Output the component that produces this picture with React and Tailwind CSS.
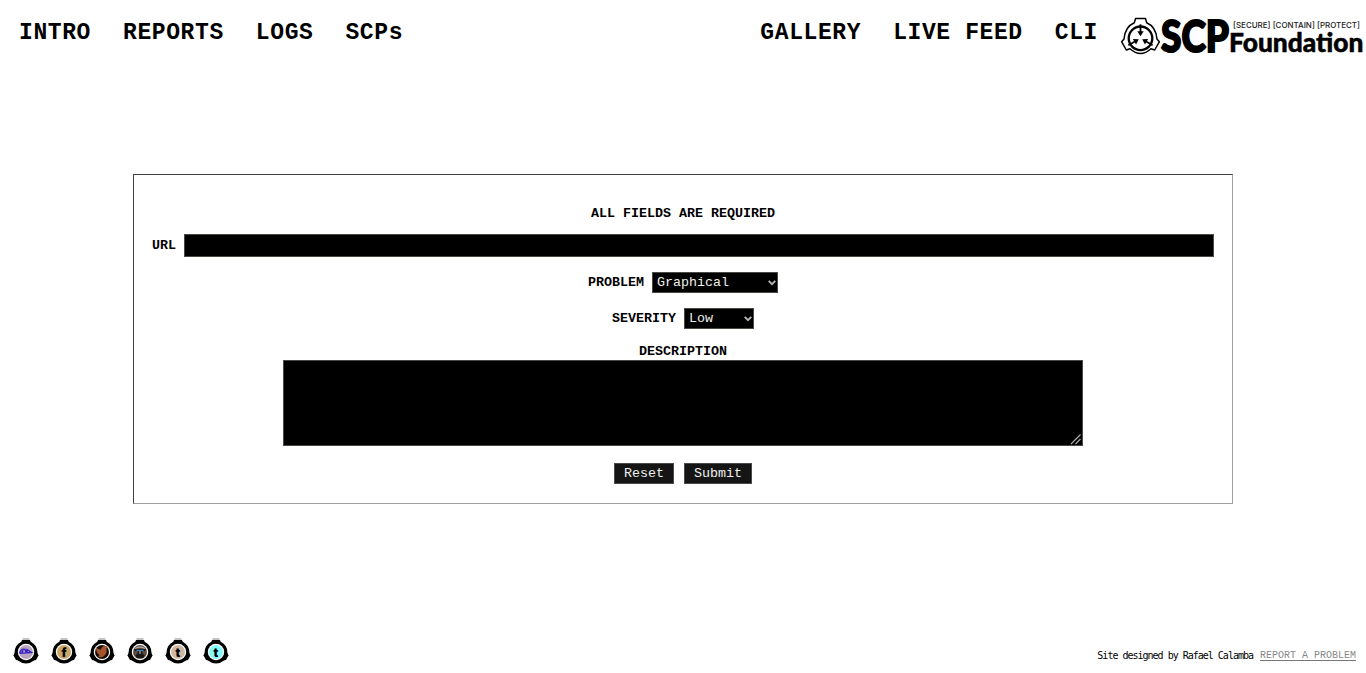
import React from "react";

const navLink = "px-4 text-[23px] leading-[27px] tracking-[0.6px] font-bold whitespace-nowrap";
const control = "border border-[#4a4a45] bg-black text-[#f0f0e8]";

function Logo() {
  return (
    <svg width="246" height="44" viewBox="1120 14 246 44" className="shrink-0 overflow-visible" role="img" aria-label="SCP Foundation">
      <g fill="none" stroke="#000" transform="translate(0 0.8)">
        <path strokeWidth="1.5" strokeLinejoin="round" d="M1135.500 17.800h10l1.200 4.200q9.300 4 10.300 16.300l2.300 2.700-4.600 8.200-3.700-1.200q-10.500 9.500-21 0l-3.700 1.200-4.600-8.200 2.300-2.700q1-12.300 10.300-16.300z" />
        <circle cx="1140.500" cy="37.500" r="11.800" strokeWidth="2.300" />
        {[0, 120, 240].map((angle) => (
          <g key={angle} transform={`rotate(${angle} 1140.5 37.5)`}>
            <path d="M1140.500 23.500v9" strokeWidth="1.800" />
            <path d="M1137.300 30.500h6.400l-3.200 5z" fill="#000" stroke="none" />
          </g>
        ))}
      </g>
      <g fill="#000" stroke="#000" fontFamily="Lato, sans-serif" fontWeight="900">
        <text x="1161" y="52" fontSize="44" strokeWidth="2" textLength="68" lengthAdjust="spacingAndGlyphs">SCP</text>
        <text x="1229" y="52" fontSize="26" strokeWidth="0.500" textLength="134.500" lengthAdjust="spacingAndGlyphs">Foundation</text>
      </g>
      <text x="1233" y="28" fill="#222" fontFamily="Inter, sans-serif" fontSize="8" fontWeight="500" textLength="127" lengthAdjust="spacingAndGlyphs">[SECURE] [CONTAIN] [PROTECT]</text>
    </svg>
  );
}

function Badge({ fill, label, children }) {
  return (
    <svg width="28" height="30" viewBox="0 0 28 30" role="img" aria-label={label}>
      <path d="M10.500 1h7v3h-7z" fill="#c4c4c4" />
      <path d="M1 18.500h26" stroke="#bbb" strokeWidth="0.800" />
      <path d="M10 3h8l.7 1.800q6.800 3.200 6.800 11.200l1 2.500-2.500 4.500-1.500.3q-8.500 6.500-17 0L4 23l-2.500-4.500 1-2.500q0-8 6.800-11.200z" fill="#000" />
      <circle cx="14" cy="15" r="8.200" fill="#fff" />
      <circle cx="14" cy="15" r="7" fill={fill} />
      {children}
    </svg>
  );
}

function Letter({ children }) {
  return <text x="14" y="19.5" textAnchor="middle" fontFamily="Inter, sans-serif" fontWeight="900" fontSize="12">{children}</text>;
}

function Chevron() {
  return (
    <svg width="8" height="6" viewBox="0 0 8 6" className="shrink-0">
      <path d="M.7.8L4 4.200 7.300.8" fill="none" stroke="#b5b5b5" strokeWidth="1.900" />
    </svg>
  );
}

function Picker({ label, value, width }) {
  return (
    <div className="flex h-[21px] items-center justify-center gap-2">
      <span className="font-bold">{label}</span>
      <button type="button" className={`${control} ${width} flex h-[21px] items-center justify-between pr-px pl-1`}>
        <span>{value}</span>
        <Chevron />
      </button>
    </div>
  );
}

export default function App() {
  return (
    <div className="flex h-[673px] flex-col overflow-hidden bg-white font-['Liberation_Mono','Courier_New',monospace] text-black">
      <header className="flex h-[174px] items-start justify-between pt-3.5 pl-[3px]">
        <nav className="flex pt-[6px]">
          <a className={navLink}>INTRO</a>
          <a className={navLink}>REPORTS</a>
          <a className={navLink}>LOGS</a>
          <a className={navLink}>SCPs</a>
        </nav>
        <div className="flex">
          <nav className="flex pt-[6px] pr-[6px]">
            <a className={navLink}>GALLERY</a>
            <a className={navLink}>LIVE FEED</a>
            <a className={navLink}>CLI</a>
          </nav>
          <Logo />
        </div>
      </header>

      <form className="mx-auto flex h-[330px] w-[1100px] shrink-0 flex-col border border-t-[#404040] border-r-[#a0a0a0] border-b-[#a0a0a0] border-l-[#404040] px-[18px] pt-[31px] text-[13.333px] leading-[15px]">
        <p className="text-center font-bold">ALL FIELDS ARE REQUIRED</p>
        <label className="mt-[13px] flex items-center gap-2 font-bold">
          URL
          <input className={`${control} h-[23px] min-w-0 flex-1`} />
        </label>
        <div className="mt-[15px] flex flex-col gap-[15px]">
          <Picker label="PROBLEM" value="Graphical" width="w-[126px]" />
          <Picker label="SEVERITY" value="Low" width="w-[70px]" />
        </div>
        <label className="mt-[15px] flex flex-col items-center gap-px font-bold">
          DESCRIPTION
          <span className={`${control} flex h-[86px] w-[800px] items-end justify-end`}>
            <svg width="12" height="12" viewBox="0 0 12 12">
              <path d="M1 11L10.500 1.500M5.500 11L10.500 6" stroke="#aaa" strokeWidth="1.200" />
            </svg>
          </span>
        </label>
        <div className="mt-[17px] flex justify-center gap-2.5">
          <button type="button" className="h-[21px] w-[60px] border border-[#4a4a4a] bg-[#151515] text-[#f0f0f0]">Reset</button>
          <button type="button" className="h-[21px] w-[68px] border border-[#4a4a4a] bg-[#151515] text-[#f0f0f0]">Submit</button>
        </div>
      </form>

      <footer className="mt-auto flex h-[36px] items-start justify-between pr-[10px] pl-3">
        <div className="flex gap-2.5">
          <Badge fill="#b7a5bd" label="DeviantArt">
            <path d="M7.500 16q2-5 5.500-3.500l1 2.500 1-2.500 4.500 3-12 .8m3.500-3l-1 3m5-3v3" fill="none" stroke="#3920c8" strokeWidth="1.400" />
          </Badge>
          <Badge fill="#c9a668" label="Facebook"><Letter>f</Letter></Badge>
          <Badge fill="#160d08" label="Twitter">
            <path d="M8 10q2 3 5 2.500 1-4 4-3.500l3 .5-1.500 1.500q1 8-5.500 9.500l-3-1 1.500-1.500q-4-3-3.500-8z" fill="#a6542b" />
          </Badge>
          <Badge fill="#60493a" label="Profile">
            <path d="M8 12h12l-1 2h-2.500v3l2 1-1 3h-7l-1-3 2-1v-3H9z" fill="#171717" />
            <path d="M9 11.500q5-3 10 0M14 13v4" fill="none" stroke="#aaa" strokeWidth="1.300" />
            <path d="M10.500 13.500h2.500m2 0h2.500" stroke="#2589d1" strokeWidth="1.500" />
          </Badge>
          <Badge fill="#cfb8a3" label="Tumblr"><Letter>t</Letter></Badge>
          <Badge fill="#85fafa" label="Twitter feed"><Letter>t</Letter></Badge>
        </div>
        <div className="flex items-start pt-[12px] text-[10px]">
          <span className="pt-px leading-[11px] font-['DejaVu_Sans_Mono',monospace] tracking-[-1px]">Site designed by Rafael Calamba</span>
          <a className="ml-[7px] border-b border-[#777] pt-[2px] leading-[9px] text-[#888]">REPORT A PROBLEM</a>
        </div>
      </footer>
    </div>
  );
}
